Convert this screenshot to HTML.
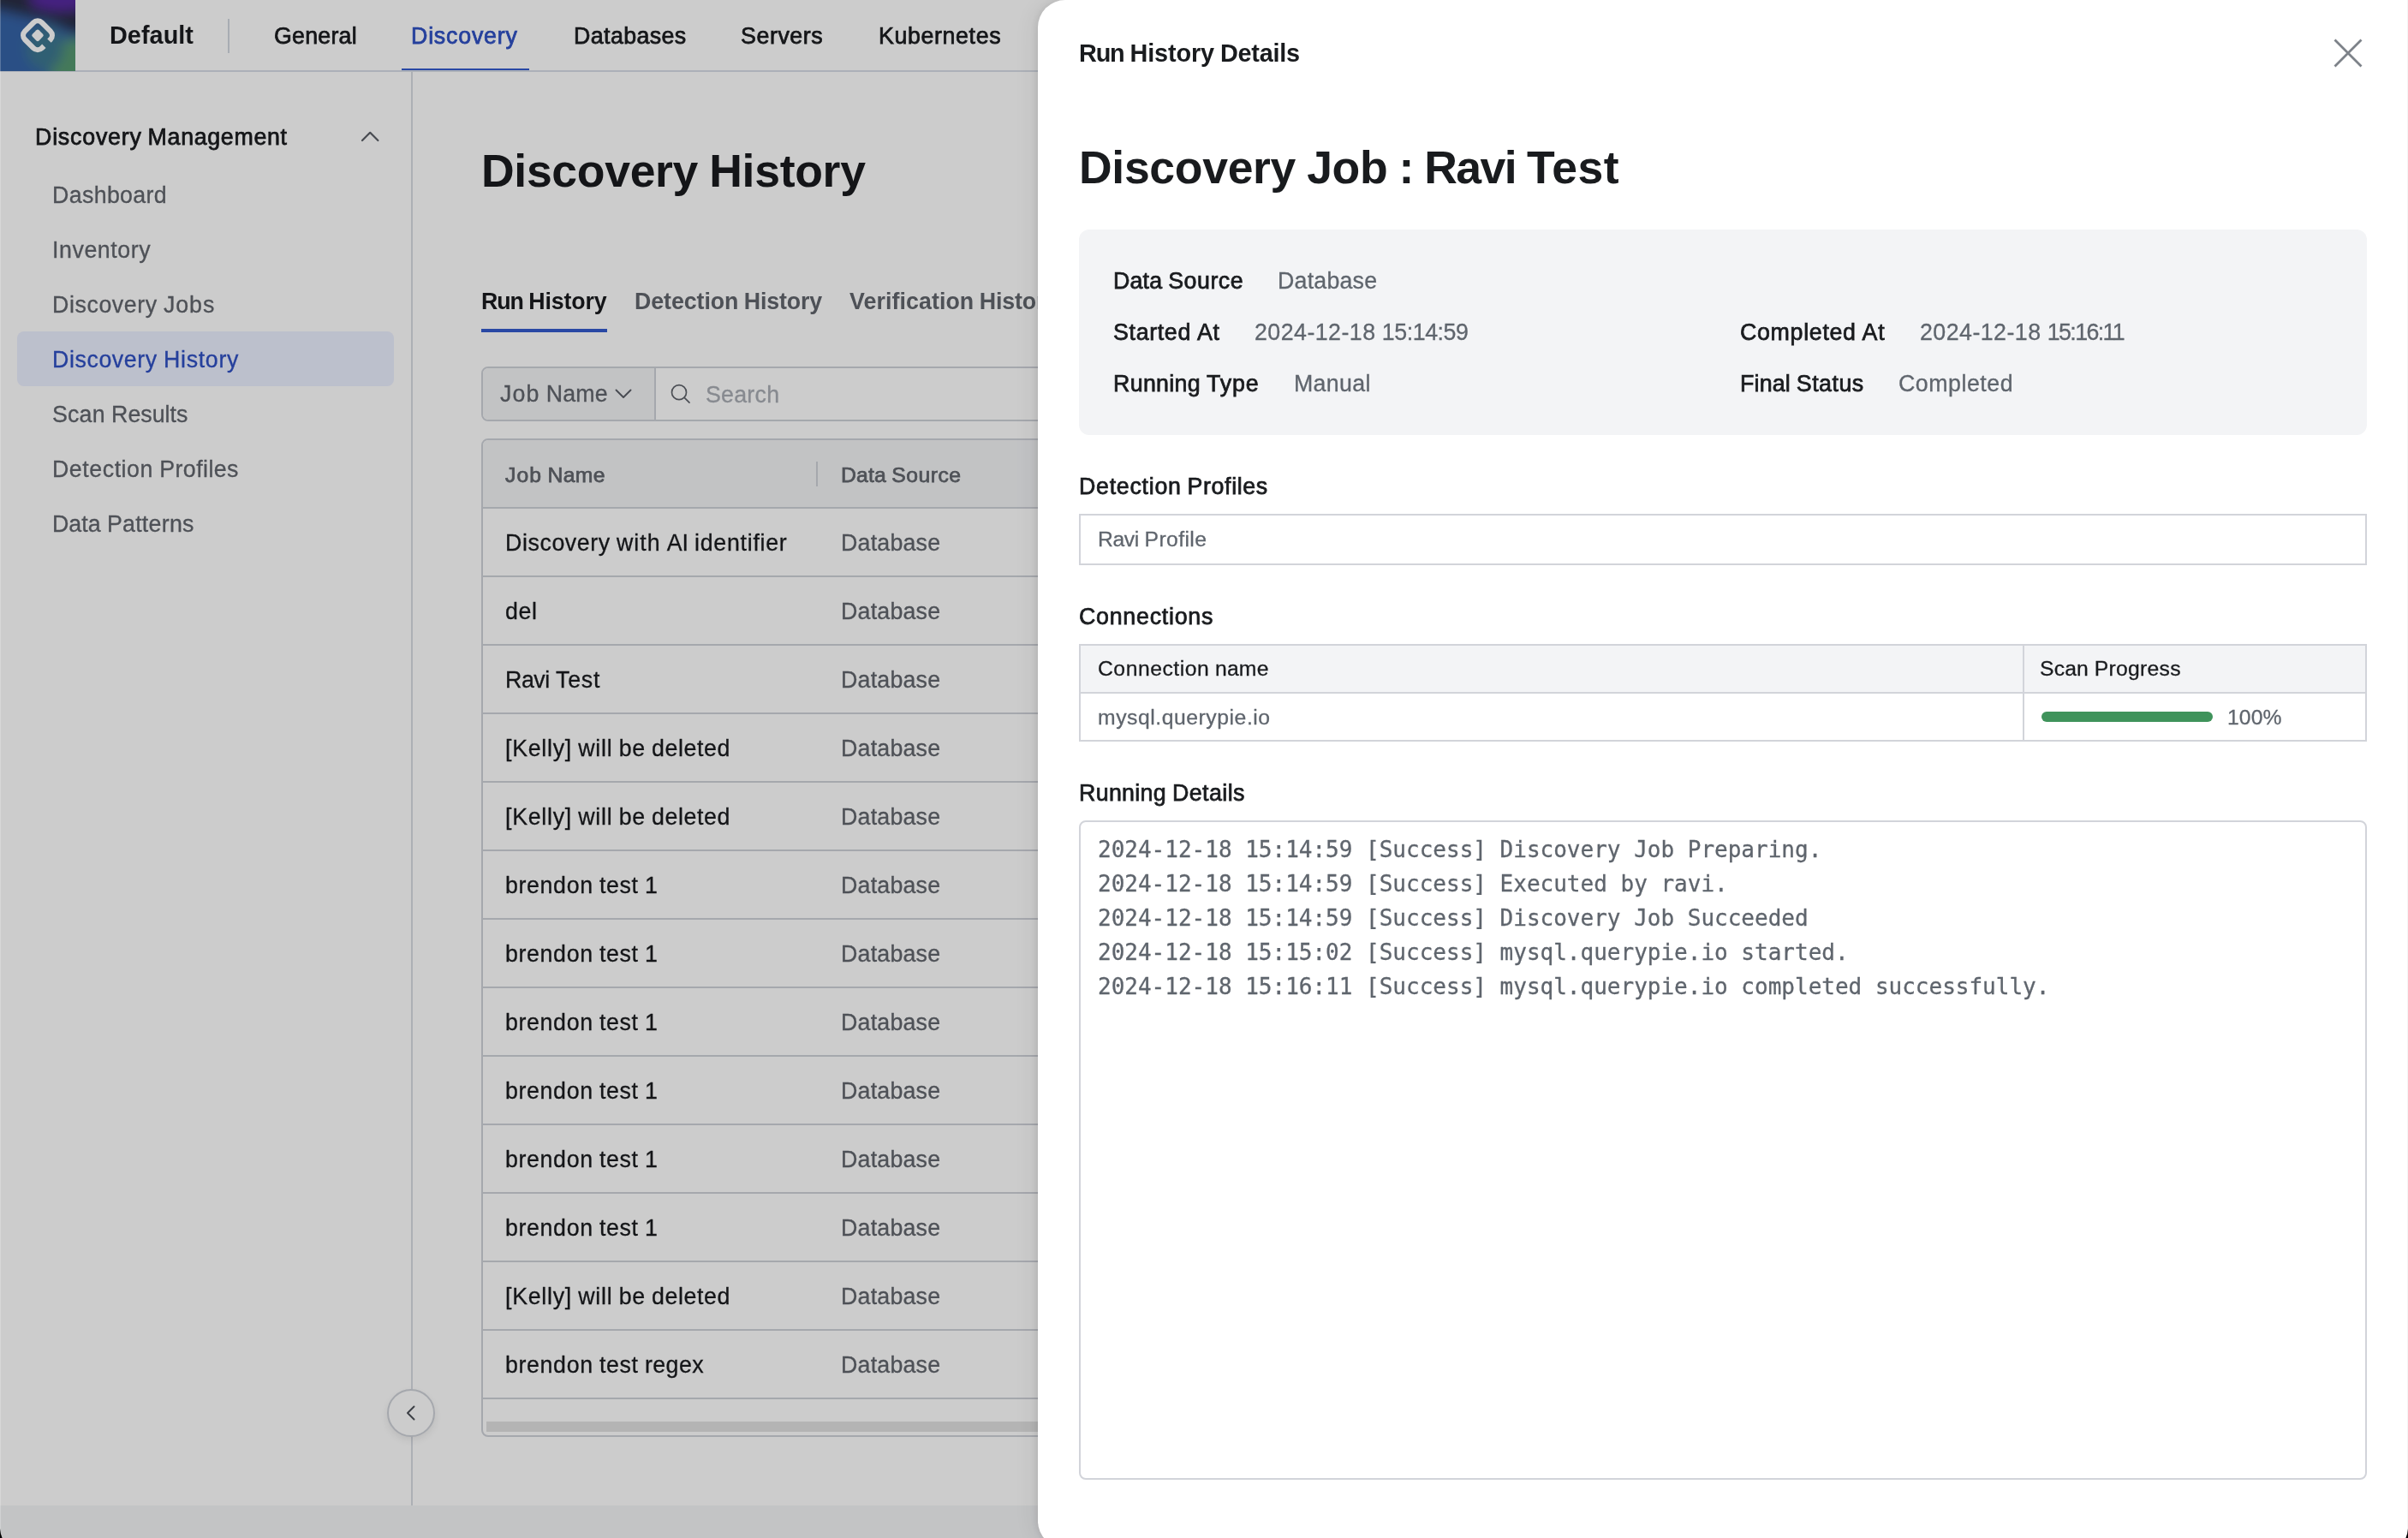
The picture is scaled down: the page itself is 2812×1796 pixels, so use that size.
<!DOCTYPE html>
<html lang="en">
<head>
<meta charset="utf-8">
<title>Discovery History - Run History Details</title>
<style>
*{box-sizing:border-box;margin:0;padding:0}
html,body{width:2812px;height:1796px;overflow:hidden;background:#fff}
body{font-family:"Liberation Sans",sans-serif;color:#191b1e;-webkit-font-smoothing:antialiased}
#app{position:absolute;left:0;top:0;width:2812px;height:1796px;overflow:hidden;background:#fff}
.a{position:absolute;white-space:pre}
.t{position:absolute;white-space:pre;display:block;will-change:transform;-webkit-text-stroke:0.3px currentColor}
/* typographic classes (sizes tuned for Liberation Sans to mimic Inter) */
.f26{font-size:26.78px;line-height:40px}
.f24{font-size:24.72px;line-height:40px}
.f28{font-size:28.84px;line-height:40px}
.f52{font-size:53.56px;line-height:64px}
.w5{font-weight:400;-webkit-text-stroke:0.75px currentColor}
.w6{font-weight:700;-webkit-text-stroke:0 currentColor}
.dark{color:#191b1e}
.gray{color:#5f656d}
.gray2{color:#62666d}
.blue{color:#2f50c4}
/* NAV */
#nav{position:absolute;left:0;top:0;width:2812px;height:84px;border-bottom:2px solid #d8dde6;background:#fff}
#logo{position:absolute;left:0;top:0;width:88px;height:83px;overflow:hidden;background:#3463a7}
.sep{position:absolute;left:266px;top:22px;width:2px;height:40px;background:#d3d8e0}
#navul{position:absolute;left:469px;top:80px;width:149px;height:2px;background:#345bcd}
/* SIDEBAR */
#side{position:absolute;left:0;top:84px;width:482px;height:1674px;border-right:2px solid #d8dce3;background:#fff}
#active{position:absolute;left:20px;top:387px;width:440px;height:64px;border-radius:8px;background:#ecf0ff}
#collapse{position:absolute;left:452px;top:1622px;width:56px;height:56px;border-radius:50%;background:#fff;border:2px solid #cfd2d9;box-shadow:0 4px 8px rgba(0,0,0,0.08)}
#foot{position:absolute;left:0;top:1758px;width:2812px;height:38px;background:#f4f5f7}
/* MAIN */
#tabul{position:absolute;left:562px;top:384px;width:147px;height:4px;background:#345bcd}
#filter{position:absolute;left:562px;top:428px;width:900px;height:64px;border:2px solid #cfd2d9;border-radius:8px;background:#fff;overflow:hidden}
#filter .sel{position:absolute;left:0;top:0;width:202px;height:60px;background:#f3f4f6;border-right:2px solid #cfd2d9}
#tbl{position:absolute;left:562px;top:512px;width:900px;height:1166px;border:2px solid #cfd2d9;border-radius:8px;background:#fff;overflow:hidden}
#tbl .hd{position:absolute;left:0;top:0;width:100%;height:80px;background:#f3f4f6;border-bottom:2px solid #cfd2d9}
#tbl .ln{position:absolute;left:0;width:100%;height:2px;background:#cfd2d9}
#tbl .cs{position:absolute;left:389px;top:25px;width:2px;height:29px;background:#cfd2d9}
#tbl .sb{position:absolute;left:4px;top:1146px;width:900px;height:12px;background:#e2e2e2}
#dim{position:absolute;left:0;top:0;width:2812px;height:1796px;background:rgba(0,0,0,0.2)}
/* DRAWER */
#drawer{position:absolute;left:1212px;top:0;width:1600px;height:1808px;background:#fff;border-radius:32px 0 0 32px;box-shadow:-2px 0 10px rgba(0,0,0,0.09),-8px 0 30px rgba(0,0,0,0.06)}
#info{position:absolute;left:48px;top:268px;width:1504px;height:240px;border-radius:12px;background:#f3f4f6}
.box{position:absolute;left:48px;width:1504px;border:2px solid #d2d4da;background:#fff}
#ctbl .hd{position:absolute;left:0;top:0;width:100%;height:56px;background:#f3f4f6;border-bottom:2px solid #d2d4da}
#ctbl .vl{position:absolute;left:1100px;top:0;width:2px;height:100%;background:#d2d4da}
#bar{position:absolute;left:1122px;top:76.5px;width:200px;height:12px;border-radius:6px;background:#3f935b}
#log{will-change:transform;-webkit-text-stroke:0.3px currentColor;font-family:"DejaVu Sans Mono","Liberation Mono",monospace;font-size:26px;line-height:40px;color:#5f656d;position:absolute;left:20px;top:12px;white-space:pre}
.w{display:inline-block;white-space:pre}
</style>
</head>
<body>
<div id="app">

<!-- top navigation -->
<div id="nav">
  <div id="logo">
    <svg width="88" height="83" viewBox="0 0 88 83" style="position:absolute;left:0;top:0">
      <defs><filter id="lb" x="-50%" y="-50%" width="200%" height="200%"><feGaussianBlur stdDeviation="7"/></filter></defs>
      <rect x="-20" y="-20" width="128" height="123" fill="#3463a7"/>
      <g filter="url(#lb)">
        <rect x="-20" y="-20" width="128" height="123" fill="#3463a7"/>
        <ellipse cx="88" cy="76" rx="32" ry="31" fill="#57996f"/>
        <ellipse cx="52" cy="56" rx="22" ry="26" fill="#3c7790"/>
        <path d="M-20 -20 L110 -20 L110 42 L88 40 L58 26 L-20 8 Z" fill="#2a2d45"/>
        <ellipse cx="70" cy="-1" rx="36" ry="14" fill="#582aa2"/>
      </g>
      <g transform="translate(44 41.3) rotate(45)" fill="none" stroke="#fff" stroke-width="6.2">
        <path d="M14 3.6 L14 7 A7 7 0 0 1 7 14 L-7 14 A7 7 0 0 1 -14 7 L-14 -7 A7 7 0 0 1 -7 -14 L7 -14 A7 7 0 0 1 14 -7 L14 -5"/>
        <rect x="-5.4" y="-5.4" width="10.8" height="10.8" rx="2.2" fill="#fff" stroke="none"/>
      </g>
    </svg>
  </div>
  <span class="t f28 w6 dark" id="t1" style="left:128px;top:21px"><span class="w" style="letter-spacing:0.040px">Default</span></span>
  <div class="sep"></div>
  <span class="t f26 w5 dark" id="t2" style="left:319.5px;top:22px"><span class="w" style="letter-spacing:0.237px">General</span></span>
  <span class="t f26 w5 blue" id="t3" style="left:480px;top:22px"><span class="w" style="letter-spacing:0.797px">Discovery</span></span>
  <span class="t f26 w5 dark" id="t4" style="left:669.5px;top:22px"><span class="w" style="letter-spacing:0.408px">Databases</span></span>
  <span class="t f26 w5 dark" id="t5" style="left:865px;top:22px"><span class="w" style="letter-spacing:0.585px">Servers</span></span>
  <span class="t f26 w5 dark" id="t6" style="left:1025.5px;top:22px"><span class="w" style="letter-spacing:0.625px">Kubernetes</span></span>
  <div id="navul"></div>
</div>

<!-- sidebar -->
<div id="side"></div>
<div id="active"></div>
<span class="t f26 w5 dark" id="t7" style="left:40.5px;top:140px"><span class="w" style="width:131.59px;letter-spacing:0.797px">Discovery </span><span class="w" style="letter-spacing:0.689px">Management</span></span>
<svg class="a" style="left:420px;top:150px" width="24" height="18" viewBox="0 0 24 18"><path d="M3 14 L12.2 4.8 L21.4 14" fill="none" stroke="#5a5e66" stroke-width="2.2" stroke-linecap="round" stroke-linejoin="round"/></svg>
<span class="t f26 gray2" id="t8" style="left:60.5px;top:207.5px"><span class="w" style="letter-spacing:0.351px">Dashboard</span></span>
<span class="t f26 gray2" id="t9" style="left:60.5px;top:271.5px"><span class="w" style="letter-spacing:0.571px">Inventory</span></span>
<span class="t f26 gray2" id="t10" style="left:60.5px;top:335.5px"><span class="w" style="width:130.09px;letter-spacing:0.589px">Discovery </span><span class="w" style="letter-spacing:0.887px">Jobs</span></span>
<span class="t f26 blue" id="t11" style="left:60.5px;top:399.5px"><span class="w" style="width:130.09px;letter-spacing:0.589px">Discovery </span><span class="w" style="letter-spacing:0.672px">History</span></span>
<span class="t f26 gray2" id="t12" style="left:60.5px;top:463.5px"><span class="w" style="width:69.06px;letter-spacing:0.184px">Scan </span><span class="w" style="letter-spacing:0.000px">Results</span></span>
<span class="t f26 gray2" id="t13" style="left:60.5px;top:527.5px"><span class="w" style="width:125.25px;letter-spacing:0.542px">Detection </span><span class="w" style="letter-spacing:0.424px">Profiles</span></span>
<span class="t f26 gray2" id="t14" style="left:60.5px;top:591.5px"><span class="w" style="width:63.91px;letter-spacing:0.016px">Data </span><span class="w" style="letter-spacing:0.262px">Patterns</span></span>
<div id="collapse">
  <svg width="52" height="52" viewBox="0 0 52 52" style="position:absolute;left:0;top:0"><path d="M29.5 18.5 L22 26 L29.5 33.5" fill="none" stroke="#4d5158" stroke-width="2" stroke-linecap="round" stroke-linejoin="round"/></svg>
</div>
<div id="foot"></div>

<!-- main content -->
<span class="t f52 w6 dark" id="t15" style="left:562px;top:168px"><span class="w" style="width:266.16px;letter-spacing:-0.325px">Discovery </span><span class="w" style="letter-spacing:-0.281px">History</span></span>
<span class="t f26 w6 dark" id="t16" style="left:562px;top:332px"><span class="w" style="width:55.33px;letter-spacing:-1.078px">Run </span><span class="w" style="letter-spacing:-0.138px">History</span></span>
<span class="t f26 w6 gray2" id="t17" style="left:741px;top:332px"><span class="w" style="width:127.86px;letter-spacing:-0.069px">Detection </span><span class="w" style="letter-spacing:-0.138px">History</span></span>
<span class="t f26 w6 gray2" id="t18" style="left:992px;top:332px"><span class="w" style="width:151.83px;letter-spacing:0.083px">Verification </span><span class="w" style="letter-spacing:-0.136px">History</span></span>
<div id="tabul"></div>

<div id="filter">
  <div class="sel"></div>
  <span class="t f26 gray2" id="t19" style="left:20px;top:10px"><span class="w" style="width:53.66px;letter-spacing:1.068px">Job </span><span class="w" style="letter-spacing:0.180px">Name</span></span>
  <svg class="a" style="left:149.5px;top:18.5px" width="28" height="20" viewBox="0 0 28 20"><path d="M5.5 6.5 L14 15 L22.5 6.5" fill="none" stroke="#5a5e66" stroke-width="1.9" stroke-linecap="round" stroke-linejoin="round"/></svg>
  <svg class="a" style="left:216px;top:14px" width="32" height="32" viewBox="0 0 32 32"><circle cx="13" cy="14.2" r="8.5" fill="none" stroke="#5f636b" stroke-width="1.7"/><path d="M19.2 20.4 L25 26.2" stroke="#5f636b" stroke-width="1.7" stroke-linecap="round"/></svg>
  <span class="t f26" id="t20" style="left:260px;top:11px;color:#a9adb4"><span class="w" style="letter-spacing:0.245px">Search</span></span>
</div>

<div id="tbl">
  <div class="hd"></div>
  <div class="cs"></div>
  <span class="t f24 w5 gray2" id="t21" style="left:26px;top:21px"><span class="w" style="width:49.53px;letter-spacing:1.094px">Job </span><span class="w" style="letter-spacing:0.312px">Name</span></span>
  <span class="t f24 w5 gray2" id="t22" style="left:418px;top:21px"><span class="w" style="width:59.25px;letter-spacing:0.164px">Data </span><span class="w" style="letter-spacing:0.484px">Source</span></span>

  <span class="t f26 dark" id="t23" style="left:26px;top:100px"><span class="w" style="width:130.09px;letter-spacing:0.589px">Discovery </span><span class="w" style="width:58.77px;letter-spacing:0.965px">with </span><span class="w" style="width:32.23px;letter-spacing:-0.180px">AI </span><span class="w" style="letter-spacing:0.723px">identifier</span></span>
  <span class="t f26 gray2" id="t24" style="left:418px;top:100px"><span class="w" style="letter-spacing:0.211px">Database</span></span>
  <div class="ln" style="top:158px"></div>
  <span class="t f26 dark" id="t25" style="left:26px;top:180px"><span class="w" style="letter-spacing:0.552px">del</span></span>
  <span class="t f26 gray2" id="t26" style="left:418px;top:180px"><span class="w" style="letter-spacing:0.211px">Database</span></span>
  <div class="ln" style="top:238px"></div>
  <span class="t f26 dark" id="t27" style="left:26px;top:260px"><span class="w" style="width:59.03px;letter-spacing:-0.453px">Ravi </span><span class="w" style="letter-spacing:0.762px">Test</span></span>
  <span class="t f26 gray2" id="t28" style="left:418px;top:260px"><span class="w" style="letter-spacing:0.211px">Database</span></span>
  <div class="ln" style="top:318px"></div>
  <span class="t f26 dark" id="t29" style="left:26px;top:340px"><span class="w" style="width:85.20px;letter-spacing:0.717px">[Kelly] </span><span class="w" style="width:47.48px;letter-spacing:0.750px">will </span><span class="w" style="width:38.39px;letter-spacing:0.656px">be </span><span class="w" style="letter-spacing:0.578px">deleted</span></span>
  <span class="t f26 gray2" id="t30" style="left:418px;top:340px"><span class="w" style="letter-spacing:0.211px">Database</span></span>
  <div class="ln" style="top:398px"></div>
  <span class="t f26 dark" id="t31" style="left:26px;top:420px"><span class="w" style="width:85.20px;letter-spacing:0.717px">[Kelly] </span><span class="w" style="width:47.48px;letter-spacing:0.750px">will </span><span class="w" style="width:38.39px;letter-spacing:0.656px">be </span><span class="w" style="letter-spacing:0.578px">deleted</span></span>
  <span class="t f26 gray2" id="t32" style="left:418px;top:420px"><span class="w" style="letter-spacing:0.211px">Database</span></span>
  <div class="ln" style="top:478px"></div>
  <span class="t f26 dark" id="t33" style="left:26px;top:500px"><span class="w" style="width:109.97px;letter-spacing:0.634px">brendon </span><span class="w" style="width:52.95px;letter-spacing:0.625px">test </span><span class="w" style="letter-spacing:-4.312px">1</span></span>
  <span class="t f26 gray2" id="t34" style="left:418px;top:500px"><span class="w" style="letter-spacing:0.211px">Database</span></span>
  <div class="ln" style="top:558px"></div>
  <span class="t f26 dark" id="t35" style="left:26px;top:580px"><span class="w" style="width:109.97px;letter-spacing:0.634px">brendon </span><span class="w" style="width:52.95px;letter-spacing:0.625px">test </span><span class="w" style="letter-spacing:-4.312px">1</span></span>
  <span class="t f26 gray2" id="t36" style="left:418px;top:580px"><span class="w" style="letter-spacing:0.211px">Database</span></span>
  <div class="ln" style="top:638px"></div>
  <span class="t f26 dark" id="t37" style="left:26px;top:660px"><span class="w" style="width:109.97px;letter-spacing:0.634px">brendon </span><span class="w" style="width:52.95px;letter-spacing:0.625px">test </span><span class="w" style="letter-spacing:-4.312px">1</span></span>
  <span class="t f26 gray2" id="t38" style="left:418px;top:660px"><span class="w" style="letter-spacing:0.211px">Database</span></span>
  <div class="ln" style="top:718px"></div>
  <span class="t f26 dark" id="t39" style="left:26px;top:740px"><span class="w" style="width:109.97px;letter-spacing:0.634px">brendon </span><span class="w" style="width:52.95px;letter-spacing:0.625px">test </span><span class="w" style="letter-spacing:-4.312px">1</span></span>
  <span class="t f26 gray2" id="t40" style="left:418px;top:740px"><span class="w" style="letter-spacing:0.211px">Database</span></span>
  <div class="ln" style="top:798px"></div>
  <span class="t f26 dark" id="t41" style="left:26px;top:820px"><span class="w" style="width:109.97px;letter-spacing:0.634px">brendon </span><span class="w" style="width:52.95px;letter-spacing:0.625px">test </span><span class="w" style="letter-spacing:-4.312px">1</span></span>
  <span class="t f26 gray2" id="t42" style="left:418px;top:820px"><span class="w" style="letter-spacing:0.211px">Database</span></span>
  <div class="ln" style="top:878px"></div>
  <span class="t f26 dark" id="t43" style="left:26px;top:900px"><span class="w" style="width:109.97px;letter-spacing:0.634px">brendon </span><span class="w" style="width:52.95px;letter-spacing:0.625px">test </span><span class="w" style="letter-spacing:-4.312px">1</span></span>
  <span class="t f26 gray2" id="t44" style="left:418px;top:900px"><span class="w" style="letter-spacing:0.211px">Database</span></span>
  <div class="ln" style="top:958px"></div>
  <span class="t f26 dark" id="t45" style="left:26px;top:980px"><span class="w" style="width:85.20px;letter-spacing:0.717px">[Kelly] </span><span class="w" style="width:47.48px;letter-spacing:0.750px">will </span><span class="w" style="width:38.39px;letter-spacing:0.656px">be </span><span class="w" style="letter-spacing:0.578px">deleted</span></span>
  <span class="t f26 gray2" id="t46" style="left:418px;top:980px"><span class="w" style="letter-spacing:0.211px">Database</span></span>
  <div class="ln" style="top:1038px"></div>
  <span class="t f26 dark" id="t47" style="left:26px;top:1060px"><span class="w" style="width:109.97px;letter-spacing:0.634px">brendon </span><span class="w" style="width:52.95px;letter-spacing:0.625px">test </span><span class="w" style="letter-spacing:0.456px">regex</span></span>
  <span class="t f26 gray2" id="t48" style="left:418px;top:1060px"><span class="w" style="letter-spacing:0.211px">Database</span></span>
  <div class="ln" style="top:1118px"></div>
  <div class="sb"></div>
</div>

<!-- modal backdrop -->
<div id="dim"></div>

<!-- drawer -->
<div id="drawer">
  <span class="t f28 w6 dark" id="t49" style="left:48px;top:42px"><span class="w" style="width:59.59px;letter-spacing:-1.167px">Run </span><span class="w" style="width:105.33px;letter-spacing:-0.150px">History </span><span class="w" style="letter-spacing:-0.232px">Details</span></span>
  <svg class="a" style="left:1508px;top:40px" width="44" height="44" viewBox="0 0 44 44"><path d="M6.5 6.5 L37.5 37.5 M37.5 6.5 L6.5 37.5" fill="none" stroke="#7d8289" stroke-width="2.8"/></svg>
  <span class="t f52 w6 dark" id="t50" style="left:48px;top:164px"><span class="w" style="width:266.16px;letter-spacing:-0.325px">Discovery </span><span class="w" style="width:107.36px;letter-spacing:-0.318px">Job </span><span class="w" style="width:29.69px;letter-spacing:-1.250px">: </span><span class="w" style="width:119.89px;letter-spacing:-1.582px">Ravi </span><span class="w" style="letter-spacing:0.453px">Test</span></span>

  <div id="info"></div>
  <span class="t f26 w5 dark" id="t51" style="left:88px;top:308px"><span class="w" style="width:64.19px;letter-spacing:0.184px">Data </span><span class="w" style="letter-spacing:0.531px">Source</span></span>
  <span class="t f26 gray" id="t52" style="left:280px;top:308px"><span class="w" style="letter-spacing:0.211px">Database</span></span>
  <span class="t f26 w5 dark" id="t53" style="left:88px;top:368px"><span class="w" style="width:97.91px;letter-spacing:0.670px">Started </span><span class="w" style="letter-spacing:0.711px">At</span></span>
  <span class="t f26 gray" id="t54" style="left:253px;top:368px"><span class="w" style="width:148.81px;letter-spacing:0.459px">2024-12-18 </span><span class="w" style="letter-spacing:-0.439px">15:14:59</span></span>
  <span class="t f26 w5 dark" id="t55" style="left:88px;top:428px"><span class="w" style="width:109.00px;letter-spacing:0.337px">Running </span><span class="w" style="letter-spacing:0.906px">Type</span></span>
  <span class="t f26 gray" id="t56" style="left:299px;top:428px"><span class="w" style="letter-spacing:0.320px">Manual</span></span>
  <span class="t f26 w5 dark" id="t57" style="left:820px;top:368px"><span class="w" style="width:142.62px;letter-spacing:0.696px">Completed </span><span class="w" style="letter-spacing:0.711px">At</span></span>
  <span class="t f26 gray" id="t58" style="left:1030px;top:368px"><span class="w" style="width:148.81px;letter-spacing:0.459px">2024-12-18 </span><span class="w" style="letter-spacing:-1.623px">15:16:11</span></span>
  <span class="t f26 w5 dark" id="t59" style="left:820px;top:428px"><span class="w" style="width:65.75px;letter-spacing:0.166px">Final </span><span class="w" style="letter-spacing:0.523px">Status</span></span>
  <span class="t f26 gray" id="t60" style="left:1005px;top:428px"><span class="w" style="letter-spacing:0.514px">Completed</span></span>

  <span class="t f26 w5 dark" id="t61" style="left:48px;top:548px"><span class="w" style="width:126.58px;letter-spacing:0.731px">Detection </span><span class="w" style="letter-spacing:0.627px">Profiles</span></span>
  <div class="box" style="top:600px;height:60px">
    <span class="t f24 gray" id="t62" style="left:20px;top:8px"><span class="w" style="width:54.50px;letter-spacing:-0.422px">Ravi </span><span class="w" style="letter-spacing:0.397px">Profile</span></span>
  </div>

  <span class="t f26 w5 dark" id="t63" style="left:48px;top:700px"><span class="w" style="letter-spacing:0.754px">Connections</span></span>
  <div class="box" id="ctbl" style="top:752px;height:114px">
    <div class="hd"></div>
    <div class="vl"></div>
    <span class="t f24 dark" id="t64" style="left:20px;top:7px"><span class="w" style="width:136.97px;letter-spacing:0.516px">Connection </span><span class="w" style="letter-spacing:0.203px">name</span></span>
    <span class="t f24 dark" id="t65" style="left:1120px;top:7px"><span class="w" style="width:63.75px;letter-spacing:0.164px">Scan </span><span class="w" style="letter-spacing:0.266px">Progress</span></span>
    <span class="t f24 gray" id="t66" style="left:20px;top:64px"><span class="w" style="letter-spacing:0.548px">mysql.querypie.io</span></span>
    <div id="bar"></div>
    <span class="t f24 gray" id="t67" style="left:1338.5px;top:63.5px"><span class="w" style="letter-spacing:0.094px">100%</span></span>
  </div>

  <span class="t f26 w5 dark" id="t68" style="left:48px;top:906px"><span class="w" style="width:109.00px;letter-spacing:0.337px">Running </span><span class="w" style="letter-spacing:0.438px">Details</span></span>
  <div class="box" style="top:958px;height:770px;border-radius:8px">
    <div id="log">2024-12-18 15:14:59 [Success] Discovery Job Preparing.
2024-12-18 15:14:59 [Success] Executed by ravi.
2024-12-18 15:14:59 [Success] Discovery Job Succeeded
2024-12-18 15:15:02 [Success] mysql.querypie.io started.
2024-12-18 15:16:11 [Success] mysql.querypie.io completed successfully.</div>
  </div>
</div>

<!-- window edge details -->
<div class="a" style="left:0;top:0;width:1px;height:1796px;background:rgba(255,255,255,0.22)"></div>
<div class="a" style="left:2811px;top:0;width:1px;height:1796px;background:rgba(0,0,0,0.04)"></div>
<svg class="a" style="left:0;top:1780px" width="2812" height="16" viewBox="0 0 2812 16"><path d="M0 5 Q0.6 12 2.6 16 L0 16 Z M2812 5 Q2811.4 12 2809.4 16 L2812 16 Z" fill="#000"/></svg>

</div>
</body>
</html>
